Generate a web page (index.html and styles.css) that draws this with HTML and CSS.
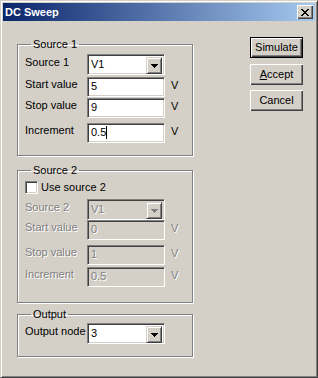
FILE: index.html
```html
<!DOCTYPE html>
<html lang="en">
<head>
    <meta charset="UTF-8">
    <title>DC Sweep</title>
    <link rel="stylesheet" href="styles.css">
</head>
<body>
    <div class="window">
        <div class="titlebar">
            <span class="title">DC Sweep</span>
            <div class="close">
                <svg width="8" height="7" viewBox="0 0 8 7" shape-rendering="crispEdges">
                    <path d="M0 0h2v1h-2zM6 0h2v1h-2zM1 1h2v1h-2zM5 1h2v1h-2zM2 2h4v1h-4zM3 3h2v1h-2zM2 4h4v1h-4zM1 5h2v1h-2zM5 5h2v1h-2zM0 6h2v1h-2zM6 6h2v1h-2z" fill="#000"/>
                </svg>
            </div>
        </div>
        <div class="dialog">
            <div class="groups">
                <fieldset class="group group-src1">
                    <legend>Source 1</legend>
                    <div class="row row-combo">
                        <span class="lbl">Source 1</span>
                        <div class="combo"><span class="val">V1</span><span class="drop"><svg width="7" height="4" viewBox="0 0 7 4" shape-rendering="crispEdges"><path d="M0 0H7V1H6V2H5V3H4V4H3V3H2V2H1V1H0Z" fill="#000"/></svg></span></div>
                    </div>
                    <div class="row row-start">
                        <span class="lbl">Start value</span>
                        <div class="edit">5</div>
                        <span class="unit">V</span>
                    </div>
                    <div class="row row-stop">
                        <span class="lbl">Stop value</span>
                        <div class="edit">9</div>
                        <span class="unit">V</span>
                    </div>
                    <div class="row row-inc">
                        <span class="lbl">Increment</span>
                        <div class="edit">0.5<span class="caret"></span></div>
                        <span class="unit">V</span>
                    </div>
                </fieldset>

                <fieldset class="group group-src2">
                    <legend>Source 2</legend>
                    <div class="check-row">
                        <span class="checkbox"></span>
                        <span>Use source 2</span>
                    </div>
                    <div class="row row-combo disabled">
                        <span class="lbl">Source 2</span>
                        <div class="combo"><span class="val">V1</span><span class="drop"><svg width="7" height="4" viewBox="0 0 7 4" shape-rendering="crispEdges"><path d="M0 0H7V1H6V2H5V3H4V4H3V3H2V2H1V1H0Z" fill="#808080"/></svg></span></div>
                    </div>
                    <div class="row row-start disabled">
                        <span class="lbl">Start value</span>
                        <div class="edit">0</div>
                        <span class="unit">V</span>
                    </div>
                    <div class="row row-stop disabled">
                        <span class="lbl">Stop value</span>
                        <div class="edit">1</div>
                        <span class="unit">V</span>
                    </div>
                    <div class="row row-inc disabled">
                        <span class="lbl">Increment</span>
                        <div class="edit">0.5</div>
                        <span class="unit">V</span>
                    </div>
                </fieldset>

                <fieldset class="group group-out">
                    <legend>Output</legend>
                    <div class="row row-combo">
                        <span class="lbl">Output node</span>
                        <div class="combo"><span class="val">3</span><span class="drop"><svg width="7" height="4" viewBox="0 0 7 4" shape-rendering="crispEdges"><path d="M0 0H7V1H6V2H5V3H4V4H3V3H2V2H1V1H0Z" fill="#000"/></svg></span></div>
                    </div>
                </fieldset>
            </div>

            <div class="buttons">
                <div class="btn btn-default">Simulate</div>
                <div class="btn"><u>A</u>ccept</div>
                <div class="btn">Cancel</div>
            </div>
        </div>
    </div>
</body>
</html>
```

FILE: styles.css
```css
body {
    margin: 0;
    font-family: 'Liberation Sans', Arial, sans-serif;
    font-size: 11px;
    line-height: 13px;
    color: #000;
    background: #d4d0c8;
}
.window {
    width: 318px;
    height: 378px;
    box-sizing: border-box;
    background: #d4d0c8;
    border: 1px solid;
    border-color: #d4d0c8 #404040 #404040 #d4d0c8;
    box-shadow: inset 1px 1px #fff, inset -1px -1px #808080;
    padding: 2px;
    display: flex;
    flex-direction: column;
}
.titlebar {
    height: 18px;
    flex: none;
    display: flex;
    align-items: center;
    justify-content: space-between;
    padding: 0 2px;
    background: linear-gradient(to right, #0a246a, #a6caf0);
}
.title {
    color: #fff;
    font-weight: bold;
    font-size: 11px;
}
.close {
    width: 16px;
    height: 14px;
    box-sizing: border-box;
    background: #d4d0c8;
    box-shadow: inset 1px 1px #fff, inset -1px -1px #404040, inset -2px -2px #808080;
    display: flex;
    justify-content: center;
    align-items: center;
    padding-right: 1px;
}
.close svg {
    display: block;
}
.dialog {
    flex: 1;
    display: flex;
    padding-left: 14px;
}
.groups {
    width: 177px;
}
.group {
    width: 176px;
    box-sizing: border-box;
    margin: 0;
    padding: 3px 0 12px 7px;
    min-width: 0;
    border: 1px solid #808080;
    box-shadow: inset 1px 1px #fff, 1px 1px #fff;
}
.group legend {
    margin-left: 6px;
    padding: 0 2px;
    line-height: 13px;
}
.group-src1 {
    margin-top: 17px;
}
.group-src2 {
    margin-top: 8px;
    padding-top: 4px;
    padding-bottom: 15px;
}
.group-out {
    margin-top: 5px;
    padding-top: 2px;
    padding-bottom: 12px;
}
.row {
    display: flex;
    align-items: flex-start;
    height: 20px;
}
.row-combo {
    height: 21px;
}
.row-start {
    margin-top: 2px;
}
.row-stop {
    margin-top: 1px;
}
.row-inc {
    margin-top: 5px;
}
.group-src2 .row-start {
    margin-top: 0;
}
.group-src2 .row-stop {
    margin-top: 5px;
}
.group-src2 .row-inc {
    margin-top: 2px;
}
.lbl {
    width: 62px;
    flex: none;
    padding-top: 1px;
}
.row-combo .lbl {
    padding-top: 2px;
}
.edit, .combo {
    width: 78px;
    box-sizing: border-box;
    background: #fff;
    border: 1px solid;
    border-color: #808080 #fff #fff #808080;
    box-shadow: inset 1px 1px #404040, inset -1px -1px #d4d0c8;
}
.edit {
    height: 20px;
    padding: 2px 0 0 3px;
}
.combo {
    height: 21px;
    display: flex;
    justify-content: space-between;
    padding: 2px;
}
.combo .val {
    padding: 1px 0 0 1px;
}
.drop {
    width: 16px;
    height: 17px;
    box-sizing: border-box;
    background: #d4d0c8;
    border: 1px solid;
    border-color: #d4d0c8 #404040 #404040 #d4d0c8;
    box-shadow: inset 1px 1px #fff, inset -1px -1px #808080;
    display: flex;
    justify-content: center;
    align-items: center;
}
.drop svg {
    display: block;
}
.caret {
    display: inline-block;
    width: 1px;
    height: 13px;
    background: #000;
    vertical-align: top;
}
.unit {
    margin-left: 6px;
    padding-top: 2px;
}
.check-row {
    display: flex;
    align-items: center;
    gap: 3px;
    height: 13px;
    margin-bottom: 5px;
}
.checkbox {
    width: 13px;
    height: 13px;
    box-sizing: border-box;
    background: #fff;
    border: 1px solid;
    border-color: #808080 #fff #fff #808080;
    box-shadow: inset 1px 1px #404040, inset -1px -1px #d4d0c8;
}
.disabled {
    color: #808080;
}
.disabled .lbl, .disabled .unit, .disabled .val, .disabled .edit {
    text-shadow: 1px 1px 0 #fff;
}
.disabled .edit, .disabled .combo {
    background: #d4d0c8;
}
.buttons {
    margin-left: 56px;
    padding-top: 16px;
    display: flex;
    flex-direction: column;
}
.btn {
    width: 53px;
    height: 21px;
    box-sizing: border-box;
    background: #d4d0c8;
    box-shadow: inset 1px 1px #fff, inset -1px -1px #404040, inset -2px -2px #808080;
    display: flex;
    justify-content: center;
    align-items: center;
    margin-bottom: 5px;
}
.btn-default {
    border: 1px solid #000;
    margin-bottom: 6px;
}
```
